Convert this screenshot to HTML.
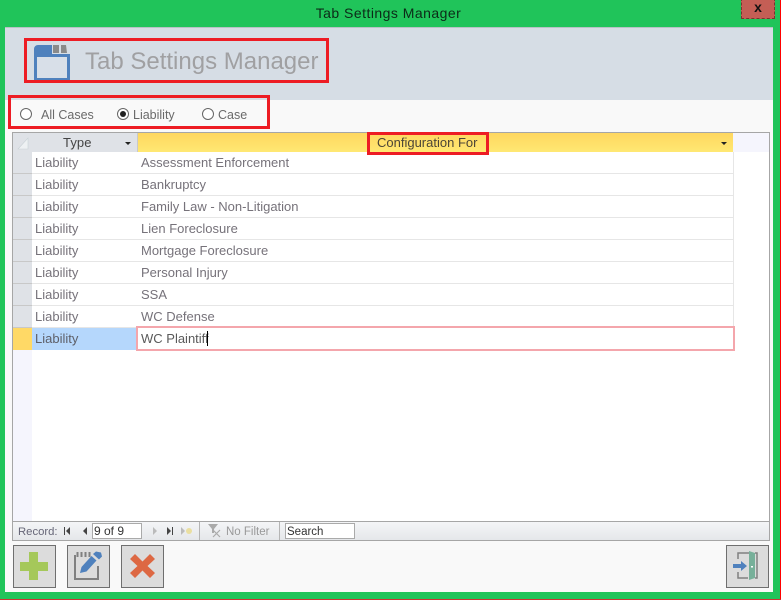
<!DOCTYPE html>
<html><head><meta charset="utf-8"><style>
html,body{margin:0;padding:0}
body{width:781px;height:600px;position:relative;overflow:hidden;background:#20c45a;font-family:"Liberation Sans",sans-serif;font-size:13px;color:#7a7a7a}
div,span{position:absolute;box-sizing:border-box;white-space:nowrap}
.red{border:3px solid #ed1c24}
.row{left:32px;width:701px;height:22px;border-bottom:1px solid #e6e6e6;background:#fff}
.t,.c{top:3px;line-height:15px;font-size:13px;color:#76727a}
.t{left:3px}
.c{left:109px}
.sel{left:13px;width:19px;height:22px;background:#dfe2e7;border-bottom:1px solid #c8c8c8}
.btn{top:545px;width:43px;height:43px;background:#dcdcdc;border:1px solid #6f6f6f}
.radio{width:12px;height:12px;border:1px solid #666;border-radius:50%;background:#fff;top:108px}
.lbl{top:107px;line-height:17px;font-size:12.500px;color:#6a6a6a}
svg{position:absolute;left:0;top:0}
</style></head><body>
<div style="left:0;top:3px;width:777px;text-align:center;line-height:20px;font-size:14px;color:#0c2a18;letter-spacing:.47px">Tab Settings Manager</div>
<div style="left:741px;top:-2px;width:34px;height:21px;background:#c45e55;border:1px dashed #7a3530"></div>
<div style="left:741px;top:0;width:34px;text-align:center;font:bold 14px/14px 'Liberation Sans',sans-serif;color:#111">x</div>
<div style="left:780px;top:0;width:1px;height:600px;background:#f00"></div>
<div style="left:0;top:599px;width:781px;height:1px;background:#c33"></div>

<div style="left:5px;top:27px;width:768px;height:565px;background:#f9f9f9"></div>
<div style="left:5px;top:27px;width:768px;height:73px;background:#d6dde5;border-top:1px solid #b8c2c4"></div>

<svg width="781" height="600">
<path d="M34 80V49a4 4 0 0 1 4-4H52V54H70V80Z" fill="#4f81bd"/>
<rect x="37" y="57" width="30" height="21" fill="#d8dfe8"/>
<path d="M53 45h6v8h-6zM61 45h5l1 8h-6z" fill="#8a8a8a"/>
</svg>
<div style="left:85px;top:45px;line-height:34px;font-size:24px;color:#a0a0a2">Tab Settings Manager</div>
<div class="red" style="left:24px;top:38px;width:305px;height:45px"></div>

<div class="radio" style="left:20px"></div><div class="lbl" style="left:41px">All Cases</div>
<div class="radio" style="left:117px"></div><div style="left:120px;top:111px;width:6px;height:6px;border-radius:50%;background:#222"></div><div class="lbl" style="left:133px">Liability</div>
<div class="radio" style="left:202px"></div><div class="lbl" style="left:218px">Case</div>
<div class="red" style="left:8px;top:95px;width:262px;height:34px"></div>

<div style="left:12px;top:132px;width:758px;height:409px;background:#fff;border:1px solid #a6a6a6"></div>
<div style="left:13px;top:133px;width:19px;height:388px;background:#f5f5fd"></div>
<div style="left:13px;top:133px;width:124px;height:19px;background:#dfe2e7"></div>
<svg width="781" height="600"><path d="M18 149L28 138V149Z" fill="#eef1f3" stroke="#c9d2d6" stroke-width=".6"/></svg>
<div style="left:63px;top:134px;line-height:18px;font-size:13px;letter-spacing:.1px;color:#444">Type</div>
<div style="left:137px;top:133px;width:596px;height:19px;background:linear-gradient(#ffd75f,#ffe873);border-left:1px solid #c9c9c9"></div>
<div style="left:733px;top:133px;width:36px;height:19px;background:#f5f5fd"></div>
<div style="left:377px;top:134px;line-height:18px;font-size:13px;color:#4c4637">Configuration For</div>
<svg width="781" height="600"><path d="M125 142h6l-3 3zM721 142h6l-3 3z" fill="#222"/></svg>

<div class="sel" style="top:152px"></div><div class="sel" style="top:174px"></div><div class="sel" style="top:196px"></div><div class="sel" style="top:218px"></div><div class="sel" style="top:240px"></div><div class="sel" style="top:262px"></div><div class="sel" style="top:284px"></div><div class="sel" style="top:306px"></div>
<div class="sel" style="top:328px;background:#ffd966;border:0"></div>

<div class="row" style="top:152px"><span class="t">Liability</span><span class="c">Assessment Enforcement</span></div>
<div class="row" style="top:174px"><span class="t">Liability</span><span class="c">Bankruptcy</span></div>
<div class="row" style="top:196px"><span class="t">Liability</span><span class="c">Family Law - Non-Litigation</span></div>
<div class="row" style="top:218px"><span class="t">Liability</span><span class="c">Lien Foreclosure</span></div>
<div class="row" style="top:240px"><span class="t">Liability</span><span class="c">Mortgage Foreclosure</span></div>
<div class="row" style="top:262px"><span class="t">Liability</span><span class="c">Personal Injury</span></div>
<div class="row" style="top:284px"><span class="t">Liability</span><span class="c">SSA</span></div>
<div class="row" style="top:306px"><span class="t">Liability</span><span class="c">WC Defense</span></div>
<div class="red" style="left:367px;top:132px;width:122px;height:23px"></div>
<div style="left:733px;top:152px;width:1px;height:176px;background:#e6e6e6"></div>
<div style="left:32px;top:328px;width:105px;height:22px;background:#b5d7fc"><span class="t" style="color:#5d5f68">Liability</span></div>
<div style="left:136px;top:326px;width:599px;height:25px;background:#fff;border:2px solid #f4a6ac"></div>
<div style="left:141px;top:331px;line-height:15px;font-size:13px;color:#5a5a5a">WC Plaintiff</div>
<div style="left:207px;top:331px;width:1px;height:15px;background:#000"></div>

<div style="left:13px;top:521px;width:756px;height:19px;background:linear-gradient(#f4f5f7,#e5e7ea);border-top:1px solid #a6a6a6"></div>
<div style="left:18px;top:524px;line-height:16px;font-size:11.300px;color:#667">Record:</div>
<svg width="781" height="600">
<path d="M64 527h1v8h-1zM70 527v8l-4-4zM87 527v8l-4-4z" fill="#444"/>
<path d="M153 527v8l4-4z" fill="#bbb"/>
<path d="M167 527v8l4-4zM172 527h1v8h-1z" fill="#444"/>
<path d="M181 527v8l4-4z" fill="#bbb"/><circle cx="189" cy="531" r="3" fill="#eadfa0"/>
<path d="M208 524h10l-4 5v4h-2v-4z" fill="#aaa"/>
<path d="M213 530l7 7M220 530l-7 7" stroke="#aaa" stroke-width="1.200"/>
<path d="M199.500 522v18M279.500 522v18" stroke="#b5b5b5"/>
</svg>
<div style="left:92px;top:523px;width:50px;height:16px;background:#fff;border:1px solid #aaa;font-size:12px;line-height:15px;padding-left:1px;color:#333">9 of 9</div>
<div style="left:226px;top:524px;line-height:16px;font-size:11.500px;color:#999">No Filter</div>
<div style="left:285px;top:523px;width:70px;height:16px;background:#fff;border:1px solid #aaa;font-size:11.500px;line-height:16px;padding-left:1px;color:#333">Search</div>

<div class="btn" style="left:13px"></div><div class="btn" style="left:67px"></div><div class="btn" style="left:121px"></div><div class="btn" style="left:726px"></div>
<svg width="781" height="600">
<path d="M29 552h9v10h10v9H38v9h-9v-9H20v-9h9z" fill="#a5c85a"/>
<path d="M75 555V579H98V566" fill="none" stroke="#808080" stroke-width="2"/>
<path d="M77.500 552v5M81.500 552v5M85.500 552v5M89.500 552v5" stroke="#808080" stroke-width="2"/>
<path d="M80 573l1.500-6 10-11 5 4.500-10 11z" fill="#4f81bd"/>
<path d="M93 554l3-2.500 5 1 1 4-3 3z" fill="#4f81bd"/>
<path d="M135 554l7.500 7.500 7.500-7.500 5 5-7.500 7 7.500 7-5 5-7.500-7.500-7.500 7.500-5-5 7.500-7-7.500-7z" fill="#dd6843"/>
<path d="M749 553h-11v6M738 572v6h10M755 553h2v25h-2" fill="none" stroke="#808080" stroke-width="1.500"/>
<path d="M749 551l6 2v25l-6 2z" fill="#77b09a"/>
<rect x="751" y="566" width="2" height="1.500" fill="#fff"/>
<path d="M733 564h8v-3l6 5-6 5v-3h-8z" fill="#4f81bd"/>
</svg>
</body></html>
